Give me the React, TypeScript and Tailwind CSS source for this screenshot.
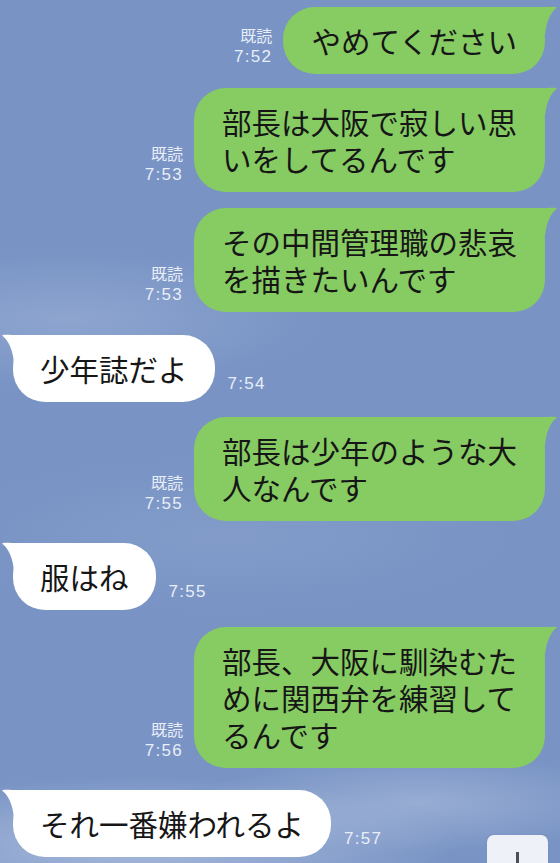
import React from "react";

type Msg = {
  side: "me" | "them";
  lines: string[];
  time: string;
  mt: string;
};

const messages: Msg[] = [
  { side: "me", lines: ["やめてください"], time: "7:52", mt: "mt-[7px]" },
  { side: "me", lines: ["部長は大阪で寂しい思", "いをしてるんです"], time: "7:53", mt: "mt-[14px]" },
  { side: "me", lines: ["その中間管理職の悲哀", "を描きたいんです"], time: "7:53", mt: "mt-[16px]" },
  { side: "them", lines: ["少年誌だよ"], time: "7:54", mt: "mt-[23px]" },
  { side: "me", lines: ["部長は少年のような大", "人なんです"], time: "7:55", mt: "mt-[15px]" },
  { side: "them", lines: ["服はね"], time: "7:55", mt: "mt-[22px]" },
  { side: "me", lines: ["部長、大阪に馴染むた", "めに関西弁を練習して", "るんです"], time: "7:56", mt: "mt-[17px]" },
  { side: "them", lines: ["それ一番嫌われるよ"], time: "7:57", mt: "mt-[22px]" },
];

function BubbleText({ lines }: { lines: string[] }) {
  return (
    <>
      {lines.map((l, i) => (
        <div key={i}>{l}</div>
      ))}
    </>
  );
}

function MyMessage({ m }: { m: Msg }) {
  return (
    <div className={`flex items-end justify-end pr-[15px] ${m.mt}`}>
      <div className="mr-[11px] mb-[6px] text-right text-[#e8eef8] leading-[22px]">
        <div className="text-[16px] font-['Noto_Sans_CJK_JP',sans-serif]">既読</div>
        <div className="text-[17px] tracking-[1.3px] font-['Liberation_Sans',sans-serif]">{m.time}</div>
      </div>
      <div className="relative">
        <div className="rounded-[32px] bg-[#87cb63] px-[28px] py-[15px] text-[29.5px] leading-[37px] text-[#161616] whitespace-nowrap font-['Noto_Sans_CJK_JP',sans-serif]">
          <BubbleText lines={m.lines} />
        </div>
        <svg
          className="absolute top-0 right-[-12px] overflow-visible"
          width="44"
          height="30"
          viewBox="0 0 44 30"
        >
          <path d="M0 0 H34 C38 0 41 -0.6 44 0.4 Q34 8 32 28 H0 Z" fill="#87cb63" />
        </svg>
      </div>
    </div>
  );
}

function TheirMessage({ m }: { m: Msg }) {
  return (
    <div className={`flex items-end pl-[13px] ${m.mt}`}>
      <div className="relative">
        <div className="rounded-[32px] bg-white px-[27px] py-[15px] text-[29.5px] leading-[37px] text-[#161616] whitespace-nowrap font-['Noto_Sans_CJK_JP',sans-serif]">
          <BubbleText lines={m.lines} />
        </div>
        <svg
          className="absolute top-0 left-[-11px] overflow-visible"
          width="44"
          height="30"
          viewBox="0 0 44 30"
        >
          <path d="M44 0 H10 C6 0 3 -0.6 0 0.4 Q10 8 12 28 H44 Z" fill="#ffffff" />
        </svg>
      </div>
      <div className="ml-[13px] mb-[7px] text-[17px] leading-[22px] tracking-[1.3px] text-[#e8eef8] font-['Liberation_Sans',sans-serif]">
        {m.time}
      </div>
    </div>
  );
}

export default function App() {
  return (
    <div className="relative w-[560px] h-[863px] overflow-hidden bg-[#7893c4] bg-[image:radial-gradient(ellipse_320px_70px_at_25%_98%,rgba(225,233,247,0.45),transparent),radial-gradient(ellipse_220px_50px_at_75%_93%,rgba(225,233,247,0.3),transparent),radial-gradient(ellipse_260px_70px_at_12%_37%,rgba(205,218,240,0.25),transparent),radial-gradient(ellipse_300px_80px_at_40%_62%,rgba(205,218,240,0.12),transparent)]">
      <div className="flex flex-col">
        {messages.map((m, i) =>
          m.side === "me" ? <MyMessage key={i} m={m} /> : <TheirMessage key={i} m={m} />
        )}
      </div>
      <div className="absolute left-[487px] top-[835px] w-[61px] h-[44px] rounded-[7px] bg-[#eef1f7] shadow-[0_0_0_1px_rgba(120,140,180,0.25)]">
        <div className="absolute left-[29px] top-[17px] w-[3px] h-[24px] bg-[#4d4f55]" />
      </div>
    </div>
  );
}
